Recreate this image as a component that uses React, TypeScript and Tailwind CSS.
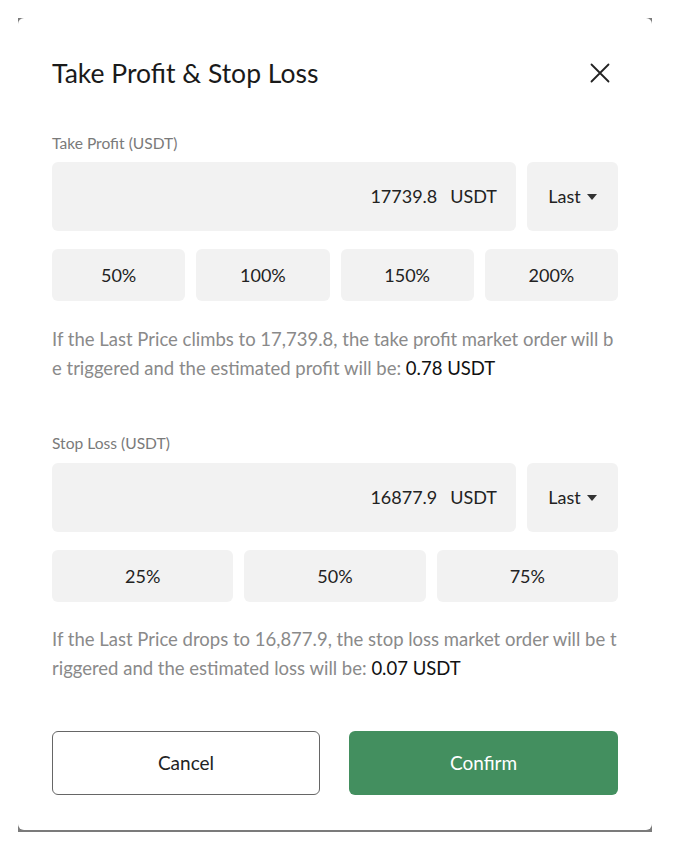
import { useState } from 'react'

const font = { fontFamily: 'Lato, "Noto Sans", sans-serif' }

function CloseIcon() {
  return (
    <svg width="20" height="20" viewBox="0 0 20 20" fill="none" stroke="#222" strokeWidth="1.8" strokeLinecap="round">
      <path d="M1.5 1.5 L18.5 18.5 M18.5 1.5 L1.5 18.5" />
    </svg>
  )
}

function PriceInput({ value }: { value: string }) {
  return (
    <div className="flex gap-[11px]">
      <div className="flex h-[69px] flex-1 items-center justify-end rounded-md bg-[#f2f2f2] pr-[19px] text-[18px] text-[#222]">
        <span>{value}</span>
        <span className="ml-[13px]">USDT</span>
      </div>
      <div className="flex h-[69px] w-[91px] items-center justify-center gap-[6px] rounded-md bg-[#f2f2f2] text-[18px] text-[#222]">
        <span>Last</span>
        <svg width="10" height="6" viewBox="0 0 10 6">
          <path d="M0 0 H10 L5 6 Z" fill="#333" />
        </svg>
      </div>
    </div>
  )
}

function Options({ items, cols }: { items: string[]; cols: string }) {
  return (
    <div className={`mt-[18px] grid gap-[11px] ${cols}`}>
      {items.map((p) => (
        <button key={p} className="flex h-[52px] items-center justify-center rounded-md bg-[#f2f2f2] text-[18px] text-[#222]">
          {p}
        </button>
      ))}
    </div>
  )
}

export default function App() {
  const [open] = useState(true)
  if (!open) return null

  return (
    <div className="min-h-[852px] bg-white pl-[18px] pt-[18px]" style={font}>
      <div className="w-[634px] bg-[#7b7b7b] pb-[2px]">
        <div className="rounded-md bg-white px-[34px] pb-[35px] pt-[39px]">
          <div className="flex items-center justify-between">
            <h2 className="text-[26.5px] leading-8 text-[#1a1a1a]">Take Profit &amp; Stop Loss</h2>
            <span className="mr-[8px]">
              <CloseIcon />
            </span>
          </div>

          <p className="mt-[44px] text-[15.6px] leading-5 text-[#7a7a7a]">Take Profit (USDT)</p>
          <div className="mt-[9px]">
            <PriceInput value="17739.8" />
          </div>
          <Options items={['50%', '100%', '150%', '200%']} cols="grid-cols-4" />
          <p className="mt-[24px] text-[18.5px] leading-[29px] whitespace-nowrap text-[#8a8a8a]">
            If the Last Price climbs to 17,739.8, the take profit market order will b
            <br />
            e triggered and the estimated profit will be: <span className="text-[#111]">0.78 USDT</span>
          </p>

          <p className="mt-[50px] text-[15.6px] leading-5 text-[#7a7a7a]">Stop Loss (USDT)</p>
          <div className="mt-[10px]">
            <PriceInput value="16877.9" />
          </div>
          <Options items={['25%', '50%', '75%']} cols="grid-cols-3" />
          <p className="mt-[23px] text-[18.5px] leading-[29px] whitespace-nowrap text-[#8a8a8a]">
            If the Last Price drops to 16,877.9, the stop loss market order will be t
            <br />
            riggered and the estimated loss will be: <span className="text-[#111]">0.07 USDT</span>
          </p>

          <div className="mt-[48px] flex gap-[29px]">
            <button className="h-[64px] w-[268px] rounded-md border border-[#666] bg-white text-[19px] text-[#222]">Cancel</button>
            <button className="h-[64px] flex-1 rounded-md bg-[#438f5f] text-[19px] text-white">Confirm</button>
          </div>
        </div>
      </div>
    </div>
  )
}
